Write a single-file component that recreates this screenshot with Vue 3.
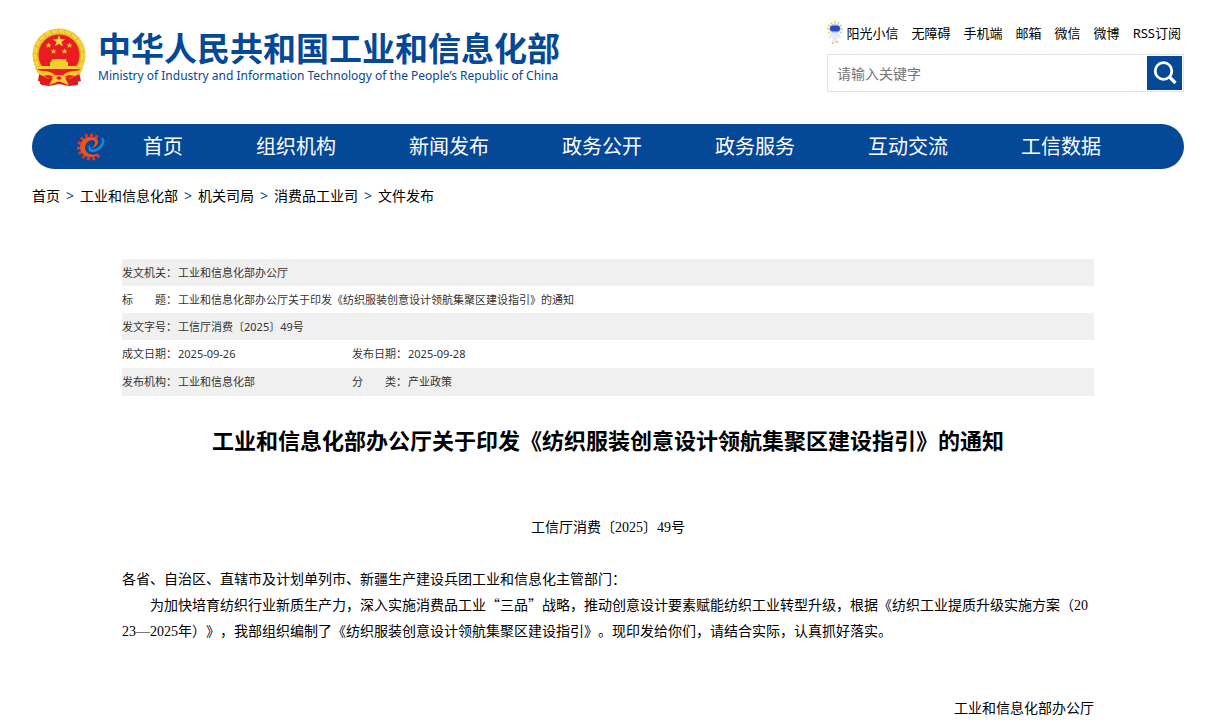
<script setup>
import { ref } from 'vue'

const keyword = ref('')
const topLinks = ['无障碍', '手机端', '邮箱', '微信', '微博', 'RSS订阅']
const navItems = ['首页', '组织机构', '新闻发布', '政务公开', '政务服务', '互动交流', '工信数据']
const crumbs = ['首页', '工业和信息化部', '机关司局', '消费品工业司', '文件发布']
const teeth = Array.from({ length: 11 }, (_, i) => 50 + i * 25)
const rays = Array.from({ length: 12 }, (_, i) => i * 30)
</script>

<template>
  <div class="page">
    <header class="header">
      <a class="brand" href="#">
        <svg class="emblem" viewBox="0 0 54 59" aria-hidden="true">
          <path d="M8 40L6 53l4 1-1 3 8 1 10-2 10 2 9-1-1-3 4-1-3-13z" fill="#df1a1e" />
          <path d="M10 53l6-3M44 53l-6-3" stroke="#a90e12" stroke-width="1" />
          <circle cx="27" cy="27" r="26.500" fill="#e6b42c" />
          <circle cx="27" cy="27" r="24" fill="none" stroke="#f6d338" stroke-width="4" stroke-dasharray="6 1" />
          <circle cx="27" cy="27" r="20.500" fill="#ea1c21" />
          <path d="M27 7l1.600 4.200h4.600l-3.700 2.800 1.400 4.300-3.900-2.600-3.900 2.600 1.400-4.300-3.700-2.800h4.600z" fill="#ffdc3c" />
          <g fill="#ffd43a">
            <path id="star" d="M16.500 14.500l.9 1.900h2l-1.600 1.300.6 2-1.900-1.200-1.900 1.200.6-2-1.600-1.300h2z" />
            <use href="#star" x="21" />
            <use href="#star" x="5" y="6" />
            <use href="#star" x="16" y="6" />
          </g>
          <path d="M20 31h14l1 4H19zM18 34h18v4h9v3H9v-3h9z" fill="#f6cf2d" />
          <path d="M6 41h42q-2 7-12 10H18Q8 48 6 41z" fill="#ea1c21" />
          <path d="M3 39q2 4 9 4 6 0 11 4h8q5-4 11-4 7 0 9-4-1 7-8 9l-6-1-5 2H22l-5-2-6 1Q4 46 3 39z" fill="#f3c827" />
          <path d="M20 49h14l3 8-6-2-4-2-4 2-6 2z" fill="#f4cb30" />
          <path d="M24 50l3-2 3 2-3 2z" fill="#ea1c21" />
          <path d="M8 49q6 3 13 1l-4 7q-5-2-9-1zM46 49q-6 3-13 1l4 7q5-2 9-1z" fill="#df1a1e" />
        </svg>
        <span class="brand-text">
          <strong class="brand-cn">中华人民共和国工业和信息化部</strong>
          <span class="brand-en">Ministry of Industry and Information Technology of the People’s Republic of China</span>
        </span>
      </a>
      <div class="tools">
        <nav class="top-links" aria-label="快捷入口">
          <a class="assistant" href="#">
            <svg class="robot" viewBox="0 0 16 24" aria-hidden="true">
              <g fill="#f9c94a">
                <circle v-for="r in rays" :key="r" cx="8" cy="1" r="1" :transform="`rotate(${r} 8 8)`" />
              </g>
              <path d="M5 11h6l3 5-1 2-2-2-1 6H6l-1-6-3 2-1-1z" fill="#e5ebfa" />
              <ellipse cx="8" cy="7.500" rx="6" ry="5" fill="#c3d0f5" />
              <rect x="3" y="4.500" width="10" height="6" rx="3" fill="#2650bd" />
              <path d="M5 21l1 2M10 20l1 2" stroke="#f4bd63" stroke-width="1.500" />
            </svg>
            <span>阳光小信</span>
          </a>
          <a v-for="link in topLinks" :key="link" href="#">{{ link }}</a>
        </nav>
        <form class="search" role="search" @submit.prevent>
          <input v-model="keyword" type="text" aria-label="请输入关键字" placeholder="请输入关键字" />
          <button type="submit" aria-label="搜索">
            <svg viewBox="0 0 35 34" aria-hidden="true">
              <circle cx="16.500" cy="15" r="8.300" fill="none" stroke="#fff" stroke-width="2.800" />
              <path d="M22.500 21l6 6" stroke="#fff" stroke-width="3.200" />
            </svg>
          </button>
        </form>
      </div>
    </header>

    <nav class="main-nav" aria-label="主导航">
      <svg class="gear" viewBox="0 0 28 28" aria-hidden="true">
        <g fill="#dc3a25">
          <rect v-for="t in teeth" :key="t" x="23.500" y="12.500" width="3.500" height="3" :transform="`rotate(${t} 13.5 14)`" />
        </g>
        <path d="M21.500 20.500Q18 24.500 13 24A10 10 0 0 1 13 4Q20.500 3.500 21 9Q20.500 14 14 15.500Q17 13.500 18 10.500Q18.500 7 15 7Q9 8 8 14Q8 21 14.500 21.500Q18.500 22 21.500 20.500z" fill="#f05220" />
        <path d="M26.500 5Q29.500 10 24 15.500Q18 20.500 13 18.500Q9.500 16 13 11Q12.500 15 15 16.500Q21 16 24.500 10Q25.500 7 24 5.500z" fill="#1c86cc" />
      </svg>
      <a v-for="item in navItems" :key="item" href="#">{{ item }}</a>
    </nav>

    <nav class="crumbs" aria-label="当前位置">
      <template v-for="(crumb, i) in crumbs" :key="crumb">
        <span v-if="i" class="sep">&gt;</span>
        <a href="#">{{ crumb }}</a>
      </template>
    </nav>

    <main class="article">
      <table class="meta">
        <colgroup>
          <col class="label-col" />
          <col class="value-col" />
          <col class="label-col" />
          <col />
        </colgroup>
        <tbody>
          <tr><th scope="row">发文机关：</th><td colspan="3">工业和信息化部办公厅</td></tr>
          <tr><th scope="row">标　　题：</th><td colspan="3">工业和信息化部办公厅关于印发《纺织服装创意设计领航集聚区建设指引》的通知</td></tr>
          <tr><th scope="row">发文字号：</th><td colspan="3">工信厅消费〔2025〕49号</td></tr>
          <tr class="tall"><th scope="row">成文日期：</th><td>2025-09-26</td><th scope="row">发布日期：</th><td>2025-09-28</td></tr>
          <tr class="tall"><th scope="row">发布机构：</th><td>工业和信息化部</td><th scope="row">分　　类：</th><td>产业政策</td></tr>
        </tbody>
      </table>

      <h1>工业和信息化部办公厅关于印发《纺织服装创意设计领航集聚区建设指引》的通知</h1>

      <div class="content">
        <p class="doc-no">工信厅消费〔2025〕49号</p>
        <p>各省、自治区、直辖市及计划单列市、新疆生产建设兵团工业和信息化主管部门：</p>
        <p class="indent">为加快培育纺织行业新质生产力，深入实施消费品工业<span class="quote">“三品”</span>战略，推动创意设计要素赋能纺织工业转型升级，根据《纺织工业提质升级实施方案（2023—2025年）》，我部组织编制了《纺织服装创意设计领航集聚区建设指引》。现印发给你们，请结合实际，认真抓好落实。</p>
        <p class="signature">工业和信息化部办公厅</p>
      </div>
    </main>
  </div>
</template>

<style>
html {
  overflow: hidden;
}
body {
  margin: 0;
  background: #fff;
}
</style>

<style scoped>
.page {
  padding: 0 42px 0 32px;
  font-family: "Noto Sans", "Noto Sans CJK SC", sans-serif;
  color: #000;
  text-spacing-trim: space-all;
}
a {
  color: inherit;
  text-decoration: none;
}
.header {
  display: flex;
  justify-content: space-between;
  align-items: flex-start;
  height: 104px;
  padding-top: 20px;
}
.brand {
  display: flex;
  gap: 12px;
  padding-top: 8px;
  color: #054897;
}
.emblem {
  width: 54px;
  height: 59px;
}
.brand-text {
  display: flex;
  flex-direction: column;
  white-space: nowrap;
}
.brand-cn {
  font-size: 33px;
  line-height: 42px;
}
.brand-en {
  font-family: "Noto Sans", sans-serif;
  font-size: 12px;
  font-weight: 400;
  line-height: 12px;
}
.tools {
  width: 357px;
}
.top-links {
  display: flex;
  justify-content: flex-end;
  align-items: center;
  gap: 13px;
  height: 26px;
  padding-right: 3px;
  font-size: 13px;
  line-height: 20px;
  white-space: nowrap;
}
.assistant {
  display: flex;
  align-items: center;
  gap: 4px;
}
.robot {
  width: 16px;
  height: 24px;
}
.search {
  display: flex;
  margin-top: 8px;
  padding: 1px;
  border: 1px solid #e4e4e4;
}
.search input {
  flex: 1;
  min-width: 0;
  height: 34px;
  padding: 0 8px;
  border: 0;
  outline: 0;
  box-sizing: border-box;
  font: 14px "Noto Sans", "Noto Sans CJK SC", sans-serif;
}
.search input::placeholder {
  color: #757575;
}
.search button {
  width: 35px;
  height: 34px;
  padding: 0;
  border: 0;
  background: #054897;
}
.search svg {
  display: block;
  width: 35px;
  height: 34px;
}
.main-nav {
  display: flex;
  align-items: center;
  gap: 73px;
  height: 45px;
  padding-left: 45px;
  border-radius: 23px;
  background: #054897;
  color: #fff;
  font-size: 20px;
  line-height: 30px;
  white-space: nowrap;
}
.gear {
  width: 28px;
  height: 28px;
  margin-right: -35px;
}
.crumbs {
  display: flex;
  gap: 6px;
  padding-top: 16px;
  font-size: 14px;
  line-height: 22px;
}
.sep {
  color: #054897;
}
.article {
  padding: 52px 90px 0;
}
.meta {
  width: 100%;
  table-layout: fixed;
  border-collapse: collapse;
  color: #333;
  font-size: 11px;
  line-height: 16px;
}
.label-col {
  width: 56px;
}
.value-col {
  width: 174px;
}
.meta th,
.meta td {
  height: 27px;
  padding: 0;
  font-weight: 400;
  text-align: left;
  white-space: nowrap;
}
.meta .tall th,
.meta .tall td {
  height: 28px;
}
.meta tr:nth-child(odd) {
  background: #f0f0f0;
}
h1 {
  margin: 28px 0 0;
  font-size: 22px;
  line-height: 32px;
  text-align: center;
}
.content {
  padding-top: 59px;
  font-family: "Liberation Serif", "Noto Sans CJK SC", serif;
  font-size: 14px;
  line-height: 26px;
}
.content p {
  margin: 0;
  word-break: break-all;
}
.content .doc-no {
  margin-bottom: 26px;
  text-align: center;
}
.indent {
  text-indent: 2em;
}
.quote {
  font-family: "Noto Sans CJK SC", sans-serif;
  line-height: 14px;
}
.content .signature {
  margin-top: 51px;
  text-align: right;
}
</style>
